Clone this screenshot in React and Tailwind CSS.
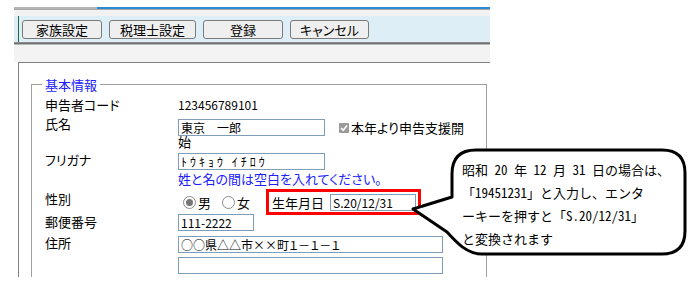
import React from 'react';

const Radio = ({ checked }) => (
  <span className="w-[13px] h-[13px] rounded-full border border-[#8c8c8c] bg-white flex items-center justify-center">
    {checked && <span className="w-[7px] h-[7px] rounded-full bg-[#767676]" />}
  </span>
);

const Field = ({ value, className }) => (
  <input
    readOnly
    value={value}
    className={`block h-[17px] border border-[#7f9db9] bg-white px-[2px] text-[12px] leading-[15px] text-black outline-none ${className}`}
  />
);

const ToolButton = ({ label, width }) => (
  <button className={`${width} h-[19px] rounded-[3px] border border-[#7a7a7a] bg-[#efefef] text-[13px] leading-[17px] text-black`}>
    {label}
  </button>
);

export default function App() {
  return (
    <div className="relative w-[694px] h-[289px] overflow-hidden bg-white text-black [font-family:'Noto_Sans_CJK_JP',sans-serif] [font-feature-settings:'palt']">
      <div className="ml-[14px] w-[476px] pt-[7px]">
        {/* top strip */}
        <div className="flex h-[2px]">
          <div className="w-[83px] bg-[#b4b4b4]" />
          <div className="flex-1 bg-[#2a8bd2]" />
        </div>
        <div className="h-[1px] bg-[#a8a8a8]" />
        <div className="h-[6px] bg-[#f2f2f2]" />

        {/* toolbar */}
        <div className="h-[26px] bg-[#ddeef6] pl-[4px]">
          <div className="flex h-full gap-[7px] border-l border-[#1f6a3c] pl-[3px] pt-[4px]">
            <ToolButton label="家族設定" width="w-[80px]" />
            <ToolButton label="税理士設定" width="w-[87px]" />
            <ToolButton label="登録" width="w-[80px]" />
            <ToolButton label="キャンセル" width="w-[79px]" />
          </div>
        </div>
        <div className="h-[1px] bg-[#8c8c8c]" />
        <div className="h-[1px] bg-[#707070]" />
        <div className="h-[1px] bg-[#b8b8b8]" />
        <div className="h-[17px] bg-[#f3f3f3]" />

        {/* panel */}
        <div className="ml-[4px] h-[215px] overflow-hidden border-t border-l border-[#808080]">
          <div className="relative ml-[12px] mt-[21px] h-[220px] w-[456px] border-t border-l border-r border-[#a0a0a0] pl-[13px]">
            <span className="absolute left-[10px] -top-[9px] bg-white px-[3px] text-[13px] leading-[17px] text-[#2020ff]">
              基本情報
            </span>

            <div className="grid grid-cols-[133px_1fr] pt-[12px] text-[13px]">
              {/* 申告者コード */}
              <div className="leading-[16px]">申告者コード</div>
              <div className="text-[12px] leading-[16px]">123456789101</div>

              {/* 氏名 */}
              <div className="pt-[3px] leading-[16px]">氏名</div>
              <div className="pt-[6px]">
                <div className="flex items-center">
                  <Field value="東京　一郎" className="w-[147px]" />
                  <span className="ml-[14px] flex h-[10px] w-[10px] items-center justify-center rounded-[1px] bg-[#9a9a9a]">
                    <svg width="8" height="8" viewBox="0 0 8 8">
                      <path d="M1 4 L3.2 6.2 L7 1.6" fill="none" stroke="white" strokeWidth="1.6" />
                    </svg>
                  </span>
                  <span className="ml-[2px] leading-[17px]">本年より申告支援開</span>
                </div>
                <div className="leading-[12px]">始</div>
              </div>

              {/* フリガナ */}
              <div className="pt-[3px] leading-[17px]">フリガナ</div>
              <div className="pt-[5px]">
                <Field value="ﾄｳｷｮｳ ｲﾁﾛｳ" className="w-[147px] tracking-[3px] [font-feature-settings:normal]" />
                <div className="mt-[1px] leading-[16px] text-[#2020ff]">姓と名の間は空白を入れてください。</div>
              </div>

              {/* 性別 / 生年月日 */}
              <div className="h-[26px] pt-[3px] leading-[17px]">性別</div>
              <div className="flex h-[26px] items-start pt-[2px]">
                <div className="flex h-[26px] items-center">
                  <span className="ml-[5px]"><Radio checked /></span>
                  <span className="ml-[2px] leading-[17px]">男</span>
                  <span className="ml-[11px]"><Radio /></span>
                  <span className="ml-[2px] leading-[17px]">女</span>
                </div>
                <div className="ml-[16px] flex h-[26px] w-[155px] shrink-0 items-center border-[3px] border-[#ff0000] pl-[3px]">
                  <span className="leading-[17px]">生年月日</span>
                  <Field value="S.20/12/31" className="ml-[6px] w-[86px]" />
                </div>
              </div>

              {/* 郵便番号 */}
              <div className="leading-[17px]">郵便番号</div>
              <div className="pt-[1px]">
                <Field value="111-2222" className="w-[76px]" />
              </div>

              {/* 住所 */}
              <div className="pt-[3px] leading-[17px]">住所</div>
              <div className="pt-[5px]">
                <Field value="○○県△△市××町１－１－１" className="w-[265px]" />
                <Field value="" className="mt-[4px] w-[265px]" />
              </div>
            </div>
          </div>
        </div>
      </div>

      {/* callout */}
      <svg className="absolute left-[405px] top-[145px]" width="285" height="115" viewBox="0 0 285 115">
        <path
          d="M71 5 H257 Q280 5 280 28 V86 Q280 109 257 109 H77 C62 109 52 98 42 87 L8 64 L47 52 V29 Q47 5 71 5 Z"
          fill="white"
          stroke="black"
          strokeWidth="3"
          strokeLinejoin="round"
        />
      </svg>
      <div className="absolute left-[462px] top-[158px] whitespace-pre text-[13px] leading-[23px] [font-feature-settings:'hwid']">
        <div>昭和 20 年 12 月 31 日の場合は、</div>
        <div>「19451231」と入力し、エンタ</div>
        <div>ーキーを押すと「S.20/12/31」</div>
        <div>と変換されます</div>
      </div>
    </div>
  );
}
